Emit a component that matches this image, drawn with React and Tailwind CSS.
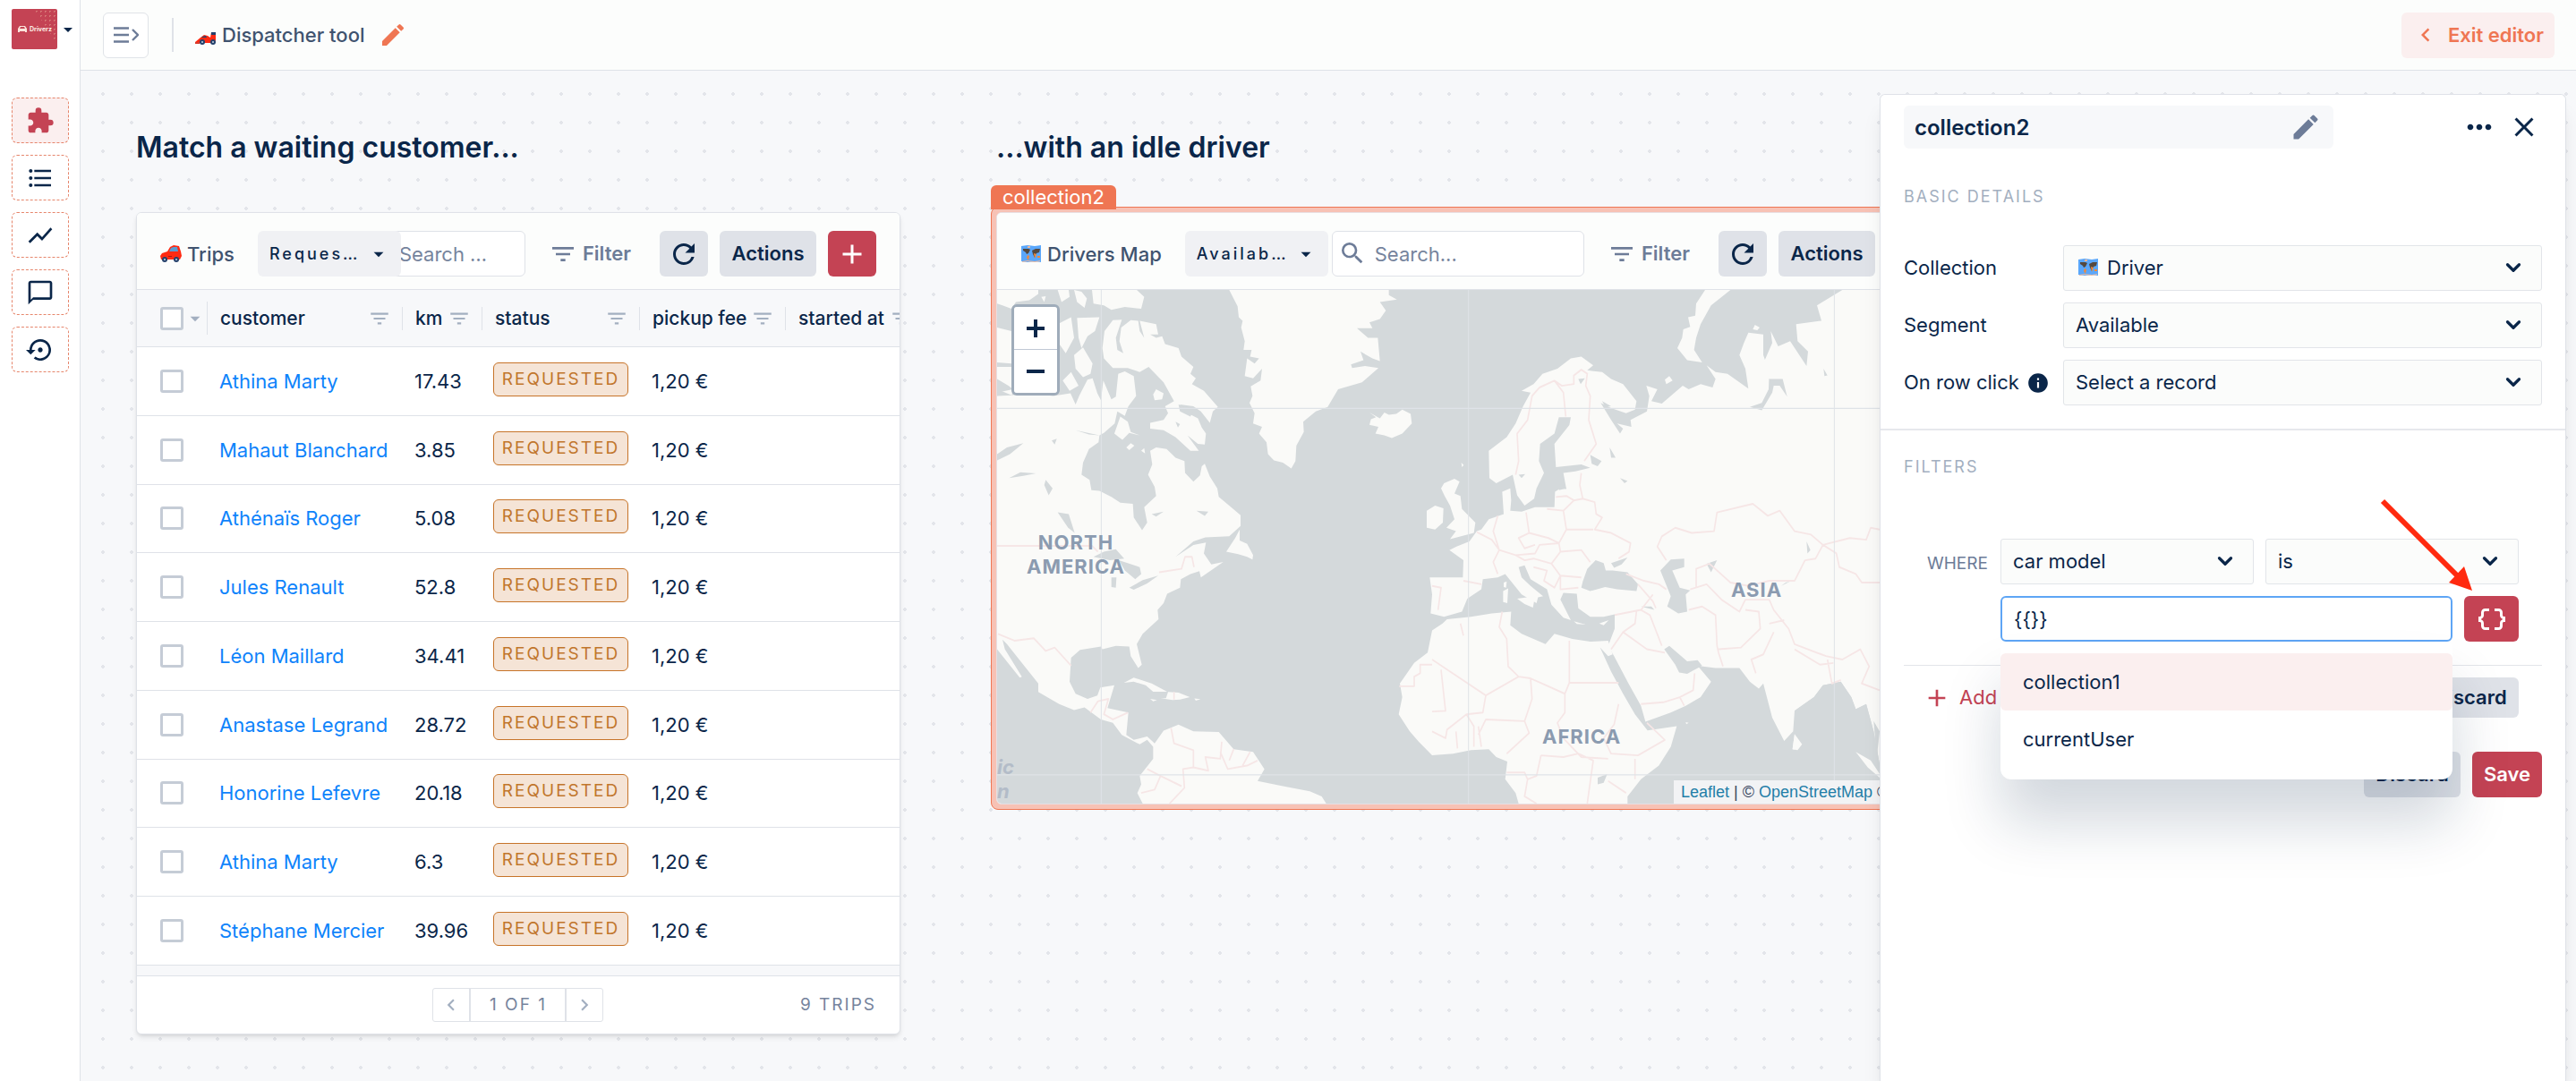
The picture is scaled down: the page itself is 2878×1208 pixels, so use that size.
import React, { useState } from "react";
import {
  MdAdd,
  MdArrowDropDown,
  MdChatBubbleOutline,
  MdChevronLeft,
  MdChevronRight,
  MdClose,
  MdDataObject,
  MdEdit,
  MdExtension,
  MdFilterList,
  MdFormatListBulleted,
  MdInfo,
  MdMoreHoriz,
  MdRefresh,
  MdSearch,
  MdSettingsBackupRestore,
  MdShowChart,
} from "react-icons/md";
import { ChevronDown } from "lucide-react";

const trips = [
  { customer: "Athina Marty", km: "17.43" },
  { customer: "Mahaut Blanchard", km: "3.85" },
  { customer: "Athénaïs Roger", km: "5.08" },
  { customer: "Jules Renault", km: "52.8" },
  { customer: "Léon Maillard", km: "34.41" },
  { customer: "Anastase Legrand", km: "28.72" },
  { customer: "Honorine Lefevre", km: "20.18" },
  { customer: "Athina Marty", km: "6.3" },
  { customer: "Stéphane Mercier", km: "39.96" },
];

const navItems = [
  { label: "Workspaces", Icon: MdExtension, active: true },
  { label: "Data", Icon: MdFormatListBulleted },
  { label: "Dashboards", Icon: MdShowChart },
  { label: "Notes", Icon: MdChatBubbleOutline },
  { label: "Activity", Icon: MdSettingsBackupRestore },
];

function RacingCar() {
  return (
    <svg viewBox="0 0 24 16" className="w-6 h-4 shrink-0" aria-hidden="true">
      <path d="M0 12 6 7l4-3 4 1 3 2 1-6h5v9l-2 3H3z" fill="#ff2a12" />
      <path d="M18 1h5v3h-5zM8 6l4-1 1 2H7z" fill="#24406b" />
      <circle cx="8" cy="12" r="3" fill="#24406b" />
      <circle cx="20" cy="12" r="3" fill="#24406b" />
      <circle cx="8" cy="12" r="1" fill="#c9d3df" />
      <circle cx="20" cy="12" r="1" fill="#c9d3df" />
      <path d="M0 12h5v2H0z" fill="#d93a2c" />
    </svg>
  );
}

function RedCar() {
  return (
    <svg viewBox="0 0 24 20" className="w-6 h-5 shrink-0" aria-hidden="true">
      <path d="M0 12 2 9l6-2 3-5 4-2 6 1 2 6 1 5-2 4H1z" fill="#ff2a12" />
      <path d="m10 7 2-4 3-1h4l1 5z" fill="#5b9bd0" />
      <circle cx="5" cy="16" r="3" fill="#24406b" />
      <circle cx="18" cy="16" r="3" fill="#24406b" />
      <circle cx="5" cy="16" r="1" fill="#c9d3df" />
      <circle cx="18" cy="16" r="1" fill="#c9d3df" />
      <path d="M9 12h4v1H9z" fill="#a51c12" />
    </svg>
  );
}

function WorldMap() {
  return (
    <svg viewBox="0 0 24 20" className="w-6 h-5 shrink-0" aria-hidden="true">
      <path d="M1 1 8 0l8 1 7-1v19l-7-1-8 1-7-1z" fill="#5aa7fb" />
      <path d="M3 4h6l2 1-2 4-2 1-1-2-3-2zM13 6l4-2h5l-1 4-3 1-2 5-2-4z" fill="#54483f" />
      <path d="m8 11 2 1-1 5-2-3zM15 9l3 1-2 5zM19 12h3v2h-3z" fill="#f08a3c" />
      <path d="M8 1h3v2H8zM2 18l6-1 8 1 6-1v1l-6 1-8-1-6 1z" fill="#e9b79c" />
    </svg>
  );
}

function FilterLines() {
  return <MdFilterList className="w-[26px] h-[26px] text-[#a3afc0] shrink-0" />;
}

function Sidebar() {
  return (
    <aside className="w-[90px] shrink-0 border-r border-[#dfe2e8] bg-white pl-[13px]">
      <button className="flex items-center pt-[10px]" aria-label="Switch project">
        <span className="relative flex h-[45px] w-[51px] items-center justify-center gap-[2px] overflow-hidden rounded-[2px] bg-[#c44354]">
          <span className="absolute right-0 top-0 h-[39px] w-[26px] bg-[radial-gradient(#dd8d84_1px,transparent_1px)] bg-[length:5px_5px] opacity-70 [clip-path:polygon(0_0,100%_0,100%_100%)]" />
          <svg viewBox="0 0 12 9" className="w-3 h-[9px]" aria-hidden="true">
            <path d="M1 4 3 1h6l2 3v4h-2V7H3v1H1zM4 2 3 4h6L8 2z" fill="#fbe3da" />
          </svg>
          <span className="relative text-[7px] font-bold leading-[9px] text-[#fbe9e2]">Driverz</span>
        </span>
        <MdArrowDropDown className="-mr-2 w-6 h-6 text-[#0a2649]" />
      </button>
      <nav className="mt-[54px] flex flex-col gap-[13px]">
        {navItems.map(({ label, Icon, active }) => (
          <button
            key={label}
            aria-label={label}
            className={
              "flex h-[51px] w-16 items-center justify-center rounded-md border border-dashed border-[#e6866c] " +
              (active ? "bg-[#fbefef] text-[#c44354]" : "text-[#0a2649]")
            }
          >
            <Icon className="w-8 h-8" />
          </button>
        ))}
      </nav>
    </aside>
  );
}

function Header() {
  return (
    <header className="flex h-[79px] items-center border-b border-[#dfe2e8] bg-[#fcfdfc] pl-[25px] pr-6">
      <button
        aria-label="Expand menu"
        className="flex h-[51px] w-[51px] items-center justify-center rounded-md border border-[#e0e3e8] bg-white"
      >
        <svg viewBox="0 0 28 18" className="w-7 h-[18px]" fill="none" stroke="#6d7c98" aria-hidden="true">
          <path d="M0 1.5h17M0 9h17M0 16.5h17" strokeWidth="2.6" />
          <path d="m21 3 6 6-6 6" strokeWidth="2.4" />
        </svg>
      </button>
      <span className="ml-[26px] h-[38px] w-[2px] bg-[#dfe2e8]" />
      <span className="ml-6 flex items-center gap-[6px]">
        <span className="pt-2">
          <RacingCar />
        </span>
        <span className="text-[22px] leading-8 font-medium text-[#40536f]">Dispatcher tool</span>
      </span>
      <button aria-label="Rename" className="ml-4 text-[#ef7653]">
        <MdEdit className="w-8 h-8" />
      </button>
      <button className="ml-auto flex h-[51px] items-center gap-[10px] rounded-md bg-[#fbefef] pl-3 pr-3 text-[22px] font-semibold text-[#ef7653]">
        <MdChevronLeft className="w-[30px] h-[30px]" />
        Exit editor
      </button>
    </header>
  );
}

function Toolbar({ icon, title, segment, compact }) {
  return (
    <div className="flex h-[86px] items-center border-b border-[#dfe2e8] bg-[#fcfdfc] px-[26px] pt-[6px]">
      {icon}
      <span className="ml-[6px] shrink-0 text-[22px] leading-8 font-medium text-[#40536f]">{title}</span>
      <div className="relative z-10 ml-[26px] w-40 shrink-0">
        <select
          aria-label={title + " segment"}
          className="h-[51px] w-full appearance-none rounded-md bg-[#f0f1f4] pl-[13px] text-[18px] font-medium tracking-[3px] text-[#0a2649]"
        >
          <option>{segment}</option>
        </select>
        <MdArrowDropDown className="pointer-events-none absolute right-3 top-[13px] w-[26px] h-[26px] text-[#0a2649]" />
      </div>
      <div className={"relative min-w-0 flex-1 " + (compact ? "-ml-4" : "ml-1")}>
        {!compact && (
          <MdSearch className="absolute left-[7px] top-[9px] w-8 h-8 text-[#6d7c98]" />
        )}
        <input
          aria-label={"Search " + title}
          placeholder={compact ? "Search …" : "Search..."}
          className={
            "h-[51px] w-full rounded-md border border-[#dfe2e8] bg-white text-[22px] text-[#0a2649] placeholder:text-[#76849d] " +
            (compact ? "pl-[13px]" : "pl-[47px]")
          }
        />
      </div>
      <button className="ml-[26px] flex shrink-0 items-center gap-[6px] text-[22px] font-semibold text-[#6d7c98]">
        <MdFilterList className="w-8 h-8" />
        Filter
      </button>
      <button
        aria-label="Refresh"
        className="ml-8 flex h-[51px] w-[54px] shrink-0 items-center justify-center rounded-md bg-[#dfe2e8] text-[#0a2649]"
      >
        <MdRefresh className="w-9 h-9" />
      </button>
      <button className="ml-[13px] h-[51px] w-[108px] shrink-0 rounded-md bg-[#dfe2e8] text-[22px] font-semibold text-[#0a2649]">
        Actions
      </button>
      <button
        aria-label="Add"
        className="ml-[13px] flex h-[51px] w-[54px] shrink-0 items-center justify-center rounded-md bg-[#c44354] text-white"
      >
        <MdAdd className="w-9 h-9" />
      </button>
    </div>
  );
}

function Checkbox({ label }) {
  return (
    <input
      type="checkbox"
      aria-label={label}
      className="block w-[26px] h-[26px] shrink-0 appearance-none rounded-[3px] border-3 border-[#c5ccd6] bg-white"
    />
  );
}

function HeadCell({ children }) {
  return (
    <th scope="col" className="border-b border-[#dfe2e8] p-0 text-left font-medium">
      <div className="flex h-[26px] items-center justify-between border-r border-[#dfe2e8] pl-[14px] pr-3">
        <span className="whitespace-nowrap">{children}</span>
        <FilterLines />
      </div>
    </th>
  );
}

function TripsCard() {
  return (
    <section className="overflow-hidden rounded-md border border-[#dfe2e8] bg-white shadow-md">
      <Toolbar icon={<RedCar />} title="Trips" segment="Reques…" compact />
      <div className="overflow-hidden bg-[#f7f8fa] pb-[11px]">
        <table className="h-[755px] w-[924px] table-fixed border-separate border-spacing-0 text-[22px] leading-8 text-[#0a2649]">
          <colgroup>
            <col className="w-[79px]" />
            <col className="w-[218px]" />
            <col className="w-[89px]" />
            <col className="w-[176px]" />
            <col className="w-[163px]" />
            <col />
          </colgroup>
          <thead className="text-[21px]">
            <tr className="h-16">
              <th scope="col" className="border-b border-[#dfe2e8] p-0">
                <div className="flex h-[37px] items-center border-r border-[#dfe2e8] pl-[26px]">
                  <Checkbox label="Select all trips" />
                  <MdArrowDropDown className="w-[26px] h-[26px] text-[#a3afc0]" />
                </div>
              </th>
              <HeadCell>customer</HeadCell>
              <HeadCell>km</HeadCell>
              <HeadCell>status</HeadCell>
              <HeadCell>pickup fee</HeadCell>
              <th scope="col" className="border-b border-[#dfe2e8] p-0 pl-[14px] text-left font-medium">
                <div className="flex items-center gap-[6px]">
                  started at
                  <FilterLines />
                </div>
              </th>
            </tr>
          </thead>
          <tbody className="bg-white">
            {trips.map((trip, i) => (
              <tr key={i} className="[&>td]:border-b [&>td]:border-[#dfe2e8]">
                <td className="p-0 pl-[26px]">
                  <Checkbox label={"Select " + trip.customer} />
                </td>
                <td className="p-0 pl-[13px] whitespace-nowrap">
                  <a href="#customer" className="text-[#0e83fb]">
                    {trip.customer}
                  </a>
                </td>
                <td className="p-0 pl-[13px]">{trip.km}</td>
                <td className="p-0 pl-[12px] pb-1">
                  <span className="flex h-[38px] w-[151px] items-center justify-center rounded-md border border-[#c77429] bg-[#f5e4d6] text-[19px] tracking-[2px] text-[#c1762c]">
                    REQUESTED
                  </span>
                </td>
                <td className="p-0 pl-[13px]">1,20 €</td>
                <td className="p-0" />
              </tr>
            ))}
          </tbody>
        </table>
      </div>
      <footer className="grid h-[65px] grid-cols-3 items-center border-t border-[#dfe2e8] px-[26px] text-[19px] tracking-[2px] text-[#76849d]">
        <span />
        <div className="flex h-[38px] items-stretch justify-self-center rounded-[3px] border border-[#dfe2e8]">
          <button aria-label="Previous page" className="w-10 pl-[7px] text-[#a3afc0]">
            <MdChevronLeft className="w-[26px] h-[26px]" />
          </button>
          <span className="flex w-[109px] items-center justify-center border-x-2 border-[#dfe2e8]">1 OF 1</span>
          <button aria-label="Next page" className="w-10 pl-[7px] text-[#a3afc0]">
            <MdChevronRight className="w-[26px] h-[26px]" />
          </button>
        </div>
        <span className="justify-self-end">9 TRIPS</span>
      </footer>
    </section>
  );
}

const americas = [
  // mainland north and central america
  "M42 320 90 318 150 312 230 320 288 312 305 345 318 318 345 272 362 268 378 312 390 332 398 275 425 330 440 322 448 255 470 248 500 262 508 320 482 350 470 378 445 365 436 400 400 428 385 435 382 455 350 475 330 515 325 550 352 565 358 595 385 597 425 615 455 632 497 635 500 675 528 712 545 690 535 645 575 612 570 585 548 550 562 520 555 480 575 470 610 475 640 500 670 510 672 545 700 570 722 552 728 525 738 518 755 555 780 590 785 615 820 640 858 668 858 700 820 730 740 733 700 745 640 790 700 755 742 748 735 780 760 812 800 805 725 850 720 832 690 840 658 855 655 880 612 898 600 925 580 945 583 972 530 1015 510 1045 527 1105 515 1115 490 1080 485 1052 440 1050 395 1060 390 1052 320 1062 290 1085 285 1155 305 1190 345 1205 378 1195 388 1172 435 1165 412 1232 482 1245 475 1310 500 1325 545 1315 570 1335 600 1298 650 1280 700 1300 785 1302 835 1352 900 1360 938 1410 915 1445 1000 1460 1090 1475 1130 1490 1145 1511 530 1511 512 1480 525 1455 520 1430 565 1380 565 1345 545 1325 520 1338 460 1310 430 1275 390 1265 335 1230 300 1238 250 1220 180 1185 180 1160 125 1100 75 1045 60 1032 68 1060 125 1140 118 1143 42 1060Z",
  // greenland
  "M820 10 848 58 852 90 865 100 860 120 872 160 868 185 895 185 890 205 920 210 905 225 880 210 872 262 900 268 930 240 925 275 892 292 898 320 888 340 905 370 900 400 930 410 920 430 945 455 950 490 970 508 1000 515 1028 532 1042 510 1045 465 1070 425 1068 395 1110 365 1150 352 1185 300 1265 280 1320 238 1275 232 1232 238 1228 228 1270 215 1260 190 1300 210 1325 218 1318 150 1285 150 1248 122 1300 122 1290 105 1325 95 1345 70 1325 45 1382 38 1355 25 1355 10Z",
  // iceland
  "M1290 368 1312 382 1295 388 1290 404 1320 410 1310 430 1340 435 1365 443 1400 430 1432 400 1428 372 1400 360 1380 372 1355 375 1340 368 1325 385Z",
  // baffin
  "M395 180 402 130 430 98 460 97 440 150 445 185 465 195 452 160 458 120 490 98 515 100 520 130 535 150 520 100 575 110 582 140 555 140 575 150 595 145 605 168 650 180 660 205 700 235 690 255 708 268 695 285 735 305 782 352 765 365 755 398 725 365 700 350 655 345 670 365 715 385 728 412 742 430 738 462 715 460 680 435 718 480 690 480 640 440 600 420 555 415 555 398 600 390 615 370 605 350 635 335 600 280 550 235 520 250 480 238 430 238 400 210Z",
  "M455 380 480 395 490 425 520 435 485 428 462 448 450 440 435 430Z",
  "M565 315 575 300 600 312 595 330 570 332ZM475 470 490 458 502 465 485 478ZM525 480 535 472 538 488Z",
  // arctic islands
  "M360 10 365 50 400 55 425 68 470 60 525 65 535 30 510 10ZM42 10 42 50 60 55 90 65 105 45 150 40 180 22 180 10ZM300 10 310 45 335 62 343 35 325 15ZM245 10 258 45 285 30 282 10ZM190 30 205 28 200 45ZM310 92 385 90 370 130 345 145 325 180 315 150ZM245 110 290 90 300 150 272 195 248 165ZM300 200 330 178 362 225 355 255 330 265 305 240ZM42 120 90 130 92 318 42 300ZM262 275 290 250 315 290 285 305Z",
  // newfoundland, caribbean
  "M855 710 840 735 810 775 850 782 880 790 898 798 900 785 880 752 855 742Z",
  "M467 1158 500 1143 560 1160 612 1184 565 1184 540 1165 500 1155ZM590 1203 608 1203 615 1185 650 1187 688 1200 655 1207 630 1208ZM555 1205 578 1208 565 1212ZM703 1204 724 1206 708 1210ZM545 1100 565 1102M575 1130 590 1140",
];

const oldWorld = [
  // eurasia
  "M-8 850 60 850 103 850 105 800 58 770 82 760 125 745 150 715 165 710 190 680 240 665 235 600 262 590 265 625 262 655 300 658 345 645 410 645 412 600 430 590 450 592 440 545 480 540 530 530 500 520 415 528 410 460 460 405 465 382 425 382 410 430 362 460 358 510 375 545 350 590 342 620 310 640 285 610 270 550 215 575 192 560 190 480 250 440 280 400 305 350 330 310 300 305 340 285 370 255 420 240 465 210 500 205 540 230 520 245 570 250 600 270 640 285 685 335 680 360 650 370 600 355 565 340 600 390 630 430 640 415 620 400 668 410 665 390 720 365 728 320 718 290 755 300 735 335 770 342 840 290 860 300 900 285 940 295 950 270 920 230 950 250 990 255 1060 298 1050 240 1030 200 1045 165 1060 135 1110 140 1110 200 1130 250 1128 300 1105 340 1065 352 1105 362 1140 310 1145 290 1165 290 1190 322 1175 270 1130 270 1115 215 1140 165 1135 130 1160 175 1200 160 1255 232 1260 190 1225 160 1220 110 1305 100 1290 55 1375 10 1770 10 1770 1511 1500 1395 1480 1300 1455 1220 1420 1235 1405 1200 1370 1155 1310 1165 1280 1200 1215 1240 1210 1300 1180 1328 1140 1260 1110 1160 1095 1175 1065 1155 1030 1115 950 1115 890 1108 935 1155 900 1200 850 1225 800 1245 715 1272 700 1225 655 1155 610 1080 590 1050 612 1000 612 958 575 965 530 965 490 940 485 898 440 895 430 915 465 975 440 968 400 930 385 885 330 855 310 815 290 820 300 850 330 875 372 905 355 908 350 925 300 900 245 840 220 850 170 855 165 885 118 912 100 950 40 965 -5 955 0 900Z",
  // africa
  "M35 985 50 972 130 965 200 955 265 950 262 990 300 1015 380 1045 410 1015 470 1030 530 1038 590 1035 605 1075 590 1080 563 1055 600 1125 640 1190 680 1250 722 1297 820 1285 800 1345 760 1400 700 1440 655 1490 655 1511 290 1511 280 1480 245 1440 252 1388 215 1375 190 1352 130 1355 70 1365 0 1370 -45 1330 -75 1300 -112 1250 -100 1200 -108 1160 -60 1100 -15 1070 0 1005Z",
  "M40 575 75 562 92 570 75 605 95 612 100 650 145 690 140 720 60 738 80 715 48 705 75 680 60 640 42 612 30 590ZM-18 655 10 640 38 648 36 690 10 710 -18 705Z",
  "M915 10 885 50 882 85 858 90 865 118 842 125 838 150 822 180 855 215 905 222 878 185 885 150 900 110 935 55 1000 10Z",
  "M780 272 795 262 806 275 785 285ZM1075 125 1082 112 1098 120 1090 128ZM238 890 255 882 252 925 238 922ZM240 865 250 862 248 880 240 878ZM285 912 345 905 338 938 310 928ZM475 978 515 988 485 986ZM560 985 592 975 575 990ZM1215 1308 1240 1338 1225 1355 1208 1352ZM1420 1360 1470 1385 1520 1450 1460 1405ZM20 475 28 480ZM98 515 106 522 100 528ZM850 1273 860 1275 852 1279Z",
];

const lakes = [
  "M365 790 400 775 440 768 468 795 420 800ZM425 850 442 850 440 880 425 878ZM450 800 520 820 525 840 505 855 470 830ZM485 880 530 858 582 845 545 868 500 886ZM245 660 282 665 302 720 280 705ZM42 490 75 470 130 458 85 490 42 508ZM82 560 120 543 172 546 130 553ZM205 565 228 590 215 610 200 580ZM305 420 385 435 350 432ZM225 450 242 445 235 462ZM560 665 600 658 575 672ZM710 655 750 658 738 670ZM42 222 90 225 90 235 42 235ZM42 270 80 290 95 300 42 310ZM650 345 700 360 690 380 655 365ZM640 395 655 402 648 412Z",
];

const innerSeas = [
  "M505 862 520 825 548 800 575 808 582 830 605 830 655 835 690 870 685 890 620 885 580 878 530 890 500 880ZM600 808 655 792 635 812 610 822Z",
  "M765 830 800 798 845 795 845 820 805 830 830 880 865 888 850 900 855 950 825 955 788 935 800 905Z",
  "M778 1060 795 1050 855 1095 890 1092 905 1108 875 1122 855 1132 828 1128 815 1105Z",
  // bay of bengal down to the malay coast
  "M1215 1511V1240L1280 1200 1310 1165 1370 1155 1405 1200 1420 1235 1455 1220 1480 1300 1500 1395 1770 1511Z",
  "M530 492 568 510 555 525 535 518ZM595 470 615 500 600 500ZM630 560 655 568 645 575ZM555 1435 587 1425 575 1450 555 1455ZM920 810 955 800 935 835ZM1185 865 1200 862 1170 875ZM430 575 450 590 425 595ZM570 335 600 350 580 352ZM490 270 512 268 498 285ZM290 550 312 548 300 560ZM350 590 385 570 375 600ZM1312 240 1325 260 1315 262ZM1255 745 1268 770 1258 780ZM700 935 745 945 735 935ZM1480 1270 1500 1300 1490 1380Z",
];

const islands = "M1215 1308 1240 1338 1225 1355 1208 1352ZM1420 1360 1470 1385 1520 1450 1460 1405Z";

const westBorders =
  "M42 758H360L380 775M585 835 660 825 672 790 695 790 702 820M45 1015 100 1035 165 1028 205 1065 235 1055 290 1108M355 1245 380 1212 415 1205 400 1250 430 1265 480 1245M625 1290 635 1335 700 1355 700 1405 665 1410 670 1465 620 1511M545 1410 590 1430 570 1470 525 1480M590 1430 660 1460M700 1405 750 1415 740 1375 790 1380 795 1330M790 1360 815 1410 880 1400 915 1385M835 1352 820 1385M890 1360 865 1400M635 1185V1207";

const eastBorders =
  "M280 550 290 510 285 430 320 390 335 320 360 295 410 275 435 290 475 285 475 260 500 243 520 255 515 290 530 320 525 390 550 460 510 510M410 275 440 310 448 380M500 545 495 580 505 620 545 630 550 665 570 675 545 710 600 720 665 750 660 775 625 795M415 615 450 612 475 625 505 620M385 650 440 655 475 625M440 655 450 710 540 710M315 660 325 720 290 735 310 765 345 755M325 720 390 735 425 750 450 710M220 670 205 715 225 770 280 785 345 780 360 755 425 750 430 775 500 770 530 805M150 718 200 740 225 770 205 805 220 840M280 785 310 800 340 795 400 810 430 775M340 820 385 830 375 860 410 880 430 845 500 850M400 810 430 845 430 885 490 880M0 875 30 880 20 945M105 860 165 870M95 985 105 1020M235 950 225 995 250 1030 255 1110 290 1140 180 1195 0 1090M-110 1168H-60V1140L-40 1130V1105H0M30 1120 45 1240 0 1242M180 1195 170 1245 115 1250 50 1295 45 1320 0 1300M290 1140 330 1145 335 1205 310 1270 180 1265 155 1310M330 1145 445 1190 445 1245 420 1275 440 1320M460 1035V1158H625M460 1158 445 1190M115 1250 140 1285V1345M80 1300 85 1350M155 1285 165 1345M310 1270 325 1305 250 1365M625 1220 610 1280 575 1320 600 1365 690 1370 780 1325 720 1275M440 1320 500 1375 590 1380M365 1370 440 1375 490 1365 540 1385 520 1511M365 1370 350 1430 320 1440 310 1420H250M320 1440 310 1490 350 1511M680 1380V1440M590 1445 650 1480M685 950 680 985 640 1010 600 1060M612 960 700 945 730 960 770 1050M640 1010 720 1060 780 1070M700 1220 775 1215 830 1200 875 1180 880 1130M830 1200 845 1225M650 840 710 860 760 870 785 885M690 870 740 920 750 940M700 945 740 900M785 800 755 760 770 730 815 705 870 720 945 715 955 660 1075 635 1125 670 1165 655 1215 715 1270 725 1310 755 1285 795 1250 800 1215 860 1130 860 1060 875M885 880V825L930 810 1000 865 1060 875M865 885 920 870 970 915 1030 950 1050 915 1130 915 1145 945 1195 1000 1215 1045 1320 1080 1375 1090 1435 1060 1465 1110 1440 1160 1500 1180M860 945 905 935 950 960 955 1050 960 1070 975 1110M960 1060 1035 1055 1100 1000 1095 950 1050 945M1145 1010 1110 1075 1070 1090 1085 1130M1130 985 1180 975M1215 1060 1300 1105 1345 1100M1325 1090 1340 1160 1370 1150M1310 755 1355 780 1365 820 1420 840 1440 865 1500 865M1310 755 1400 735 1455 740 1470 705 1500 710";

function WorldTiles() {
  return (
    <svg
      viewBox="42 10 3222 1501"
      preserveAspectRatio="none"
      className="absolute inset-0 h-full w-full"
      role="img"
      aria-label="World map"
    >
      <rect x="42" y="10" width="3222" height="1501" fill="#d4d9db" />
      <g fill="#fafaf8">
        {americas.map((d) => (
          <path key={d} d={d} />
        ))}
        <g transform="translate(1500 0)">
          {oldWorld.map((d) => (
            <path key={d} d={d} />
          ))}
        </g>
      </g>
      <g fill="#d4d9db">
        {lakes.map((d) => (
          <path key={d} d={d} />
        ))}
        <g transform="translate(1500 0)">
          {innerSeas.map((d) => (
            <path key={d} d={d} />
          ))}
          <path d={islands} fill="#fafaf8" />
        </g>
      </g>
      <g fill="none" stroke="#f6e6e6" strokeWidth="5" strokeLinejoin="round">
        <path d={westBorders} />
        <path d={eastBorders} transform="translate(1500 0)" />
      </g>
      <path
        d="M391 10V1511M1622 10V1511M2848 10V1511M42 356H3264M42 1427H3264"
        fill="none"
        stroke="#dfe3e8"
        strokeWidth="3"
      />
    </svg>
  );
}

function DriversMap() {
  return (
    <div className="relative">
      <span className="absolute -left-[6px] -top-6 rounded-t-md bg-[#ef7653] px-[13px] text-[22px] leading-[27px] text-white">
        collection2
      </span>
      <div className="-m-[6px] rounded-lg border border-[#ef7653] bg-[#f7c2b5] p-[5px]">
        <section className="overflow-hidden rounded-md border border-[#e8dfe2] bg-white">
          <Toolbar icon={<WorldMap />} title="Drivers Map" segment="Availab…" />
          <div className="relative h-[574px] overflow-hidden text-[22px] font-bold leading-[27px] text-[#8b9bb0]">
            <WorldTiles />
            <span className="absolute left-[31px] top-[269px] w-[114px] text-center tracking-[1px]">
              NORTH AMERICA
            </span>
            <span className="absolute left-[820px] top-[322px] tracking-[1px]">ASIA</span>
            <span className="absolute left-[609px] top-[486px] tracking-[1px]">AFRICA</span>
            <span className="absolute left-0 top-[520px] text-[#b3bcc8] italic">
              ic
              <br />n
            </span>
            <div className="absolute left-4 top-4 flex flex-col overflow-hidden rounded-md border-3 border-[#9facba] text-[#0a2649]">
              <button aria-label="Zoom in" className="flex h-12 w-12 items-center justify-center border-b border-[#c0c8d4] bg-white">
                <svg viewBox="0 0 20 20" className="w-5 h-5" stroke="currentColor" strokeWidth="4">
                  <path d="M0 10h20M10 0v20" />
                </svg>
              </button>
              <button aria-label="Zoom out" className="flex h-12 w-12 items-center justify-center bg-white">
                <svg viewBox="0 0 20 20" className="w-5 h-5" stroke="currentColor" strokeWidth="4">
                  <path d="M0 10h20" />
                </svg>
              </button>
            </div>
            <p className="absolute bottom-0 right-0 w-[318px] whitespace-nowrap bg-[#f2f3f5] pl-2 font-['Liberation_Sans',sans-serif] text-[18px] font-normal leading-[26px] text-[#33415c]">
              <a href="#leaflet" className="text-[#1f7ea8]">Leaflet</a> | ©{" "}
              <a href="#osm" className="text-[#1f7ea8]">OpenStreetMap</a> ©{" "}
              <a href="#carto" className="text-[#1f7ea8]">CARTO</a>
            </p>
          </div>
        </section>
      </div>
    </div>
  );
}

function SelectBox({ id, label, option, icon }) {
  return (
    <div className="relative">
      {icon && <span className="pointer-events-none absolute left-4 top-[15px]">{icon}</span>}
      <select
        id={id}
        aria-label={label}
        className={
          "h-[51px] w-full appearance-none rounded-[3px] border border-[#e2e5e9] bg-[#fbfcfb] text-[22px] text-[#0a2649] " +
          (icon ? "pl-12" : "pl-[13px]")
        }
      >
        <option>{option}</option>
      </select>
      <ChevronDown
        strokeWidth={3}
        className="pointer-events-none absolute right-[19px] top-[12px] w-[26px] h-[26px] text-[#0a2649]"
      />
    </div>
  );
}

function EditPanel() {
  const [name, setName] = useState("collection2");
  const [value, setValue] = useState("{{}}");

  return (
    <aside className="absolute bottom-0 right-[11px] top-[26px] z-20 w-[767px] rounded-t-md border border-b-0 border-[#dfe2e8] bg-white pt-3 text-[22px] text-[#0a2649] shadow-xl">
      <div className="flex items-center pl-[26px] pr-7">
        <div className="relative w-[480px]">
          <input
            aria-label="Component name"
            value={name}
            onChange={(e) => setName(e.target.value)}
            className="h-12 w-full rounded-md bg-[#f7f8fa] pl-3 text-[24px] font-semibold"
          />
          <MdEdit className="absolute right-[13px] top-[6px] w-9 h-9 text-[#6d7c98]" />
        </div>
        <button aria-label="More" className="ml-auto">
          <MdMoreHoriz className="w-10 h-10" />
        </button>
        <button aria-label="Close" className="ml-3">
          <MdClose className="w-9 h-9" />
        </button>
      </div>

      <div className="px-[26px] pb-[26px]">
        <h2 className="mt-[42px] text-[18px] leading-6 tracking-[2px] text-[#a3afc0]">BASIC DETAILS</h2>
        <div className="mt-[42px] grid grid-cols-[178px_1fr] items-center gap-y-[13px]">
          <label htmlFor="collection">Collection</label>
          <SelectBox id="collection" option="Driver" icon={<WorldMap />} />
          <label htmlFor="segment">Segment</label>
          <SelectBox id="segment" option="Available" />
          <label htmlFor="row-click" className="flex items-center gap-2 whitespace-nowrap">
            On row click
            <MdInfo className="w-[26px] h-[26px]" />
          </label>
          <SelectBox id="row-click" option="Select a record" />
        </div>
      </div>

      <div className="border-t-2 border-[#e6e8ec] px-[26px]">
        <h2 className="mt-[29px] text-[18px] leading-6 tracking-[2px] text-[#a3afc0]">FILTERS</h2>
        <div className="mt-[68px] grid grid-cols-[82px_1fr] gap-y-[13px] px-[26px]">
          <span className="pt-4 text-[19px] leading-6 text-[#6d7c98]">WHERE</span>
          <div className="grid grid-cols-2 gap-[13px]">
            <SelectBox label="Field" option="car model" />
            <SelectBox label="Operator" option="is" />
          </div>
          <span />
          <div className="relative flex gap-[13px]">
            <input
              aria-label="Filter value"
              value={value}
              onChange={(e) => setValue(e.target.value)}
              className="h-[51px] min-w-0 flex-1 rounded-md border-2 border-[#5ea5f5] bg-white pl-[13px] outline-none"
            />
            <div className="relative">
              <button
                aria-label="Insert variable"
                className="flex h-[51px] w-[61px] items-center justify-center rounded-md bg-[#c44354] text-white"
              >
                <MdDataObject className="w-9 h-9" />
              </button>
              <svg
                viewBox="0 0 112 112"
                className="pointer-events-none absolute -left-[99px] bottom-[53px] z-10 w-28 h-28"
                aria-hidden="true"
              >
                <path d="M8 8 96 96" stroke="#ff2a0f" strokeWidth="6" />
                <path d="m108 108-9-27-17 18z" fill="#ff2a0f" />
              </svg>
            </div>
            <ul className="absolute left-0 right-[74px] top-[52px] z-20 rounded-b-xl rounded-t-md bg-white pb-[13px] pt-3 shadow-[0_48px_64px_rgba(10,38,73,0.18)]">
              <li>
                <button className="h-16 w-full rounded-md bg-[#fbefef] pl-[25px] text-left">collection1</button>
              </li>
              <li>
                <button className="h-16 w-full pl-[25px] text-left">currentUser</button>
              </li>
            </ul>
          </div>
        </div>
        <div className="mt-[26px] flex items-center justify-between border-t border-[#e2e5e9] px-[26px] pt-[13px]">
          <button className="flex items-center gap-[9px] text-[#c44354]">
            <MdAdd className="-ml-[5px] w-8 h-8" />
            Add
          </button>
          <button className="h-[45px] w-[108px] rounded-md bg-[#dfe2e8] font-semibold">Discard</button>
        </div>
        <div className="mt-[38px] flex justify-end gap-[13px] font-semibold">
          <button className="h-[51px] w-[108px] rounded-md bg-[#dfe2e8]">Discard</button>
          <button className="h-[51px] w-[78px] rounded-md bg-[#c44354] text-white">Save</button>
        </div>
      </div>
    </aside>
  );
}

export default function App() {
  return (
    <div className="flex h-screen overflow-hidden font-[Inter,sans-serif]">
      <Sidebar />
      <div className="flex min-w-0 flex-1 flex-col">
        <Header />
        <main className="relative flex-1 overflow-hidden bg-[#f7f8fa] bg-[radial-gradient(#e3e5ea_2px,transparent_2px)] bg-[length:32px_32px] bg-[position:9px_10px]">
          <div className="grid grid-cols-[854fr_1076fr] items-start gap-[107px] pl-[62px] pr-[689px] pt-[66px]">
            <div className="min-w-0">
              <h1 className="mb-[52px] text-[32px] leading-10 font-semibold text-[#0a2649]">
                Match a waiting customer...
              </h1>
              <TripsCard />
            </div>
            <div className="min-w-0">
              <h1 className="mb-[52px] text-[32px] leading-10 font-semibold text-[#0a2649]">
                ...with an idle driver
              </h1>
              <DriversMap />
            </div>
          </div>
          <EditPanel />
        </main>
      </div>
    </div>
  );
}
